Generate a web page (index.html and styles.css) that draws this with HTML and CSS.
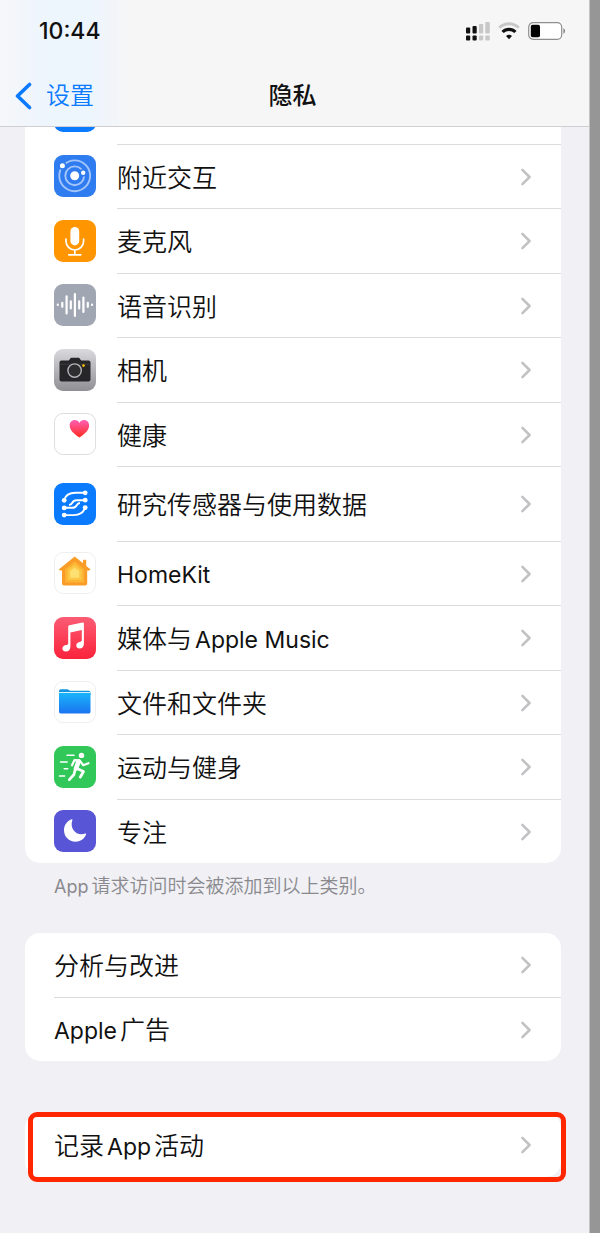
FILE: index.html
```
<!DOCTYPE html>
<html lang="zh-CN">
<head>
    <meta charset="UTF-8">
    <meta name="viewport" content="width=device-width, initial-scale=1.0">
    <title>隐私</title>
    <link rel="stylesheet" href="styles.css">
</head>
<body>
    <!-- 通用箭头 -->
    <svg class="defs" width="0" height="0" aria-hidden="true">
        <symbol id="arrow" viewBox="0 0 12 20">
            <path d="M2 2l8 8-8 8" fill="none" stroke="#c2c2c5" stroke-width="2.8" stroke-linecap="round" stroke-linejoin="round"/>
        </symbol>
    </svg>

    <div class="screen">
        <header>
            <div class="status-bar">
                <span class="time">10:44</span>
                <div class="status-icons">
                    <svg width="24" height="20" viewBox="0 0 24 20">
                        <g fill="#111">
                            <rect x="0" y="6.5" width="4.2" height="6" rx="1"/>
                            <rect x="6.5" y="5" width="4.2" height="7.5" rx="1"/>
                            <rect x="0" y="14.5" width="4.2" height="5" rx="1"/>
                            <rect x="6.5" y="14.5" width="4.2" height="5" rx="1"/>
                        </g>
                        <g fill="#c8c8c9">
                            <rect x="13" y="3" width="4.2" height="9.5" rx="1"/>
                            <rect x="19.3" y="1" width="4.5" height="11.5" rx="1"/>
                            <rect x="13" y="14.5" width="4.2" height="5" rx="1"/>
                            <rect x="19.3" y="14.5" width="4.5" height="5" rx="1"/>
                        </g>
                    </svg>
                    <svg width="22" height="18" viewBox="0 0 22 18">
                        <path d="M1.3 5.8a13.6 13.6 0 0 1 19.4 0" fill="none" stroke="#c8c8c9" stroke-width="3"/>
                        <path d="M4.6 10a9 9 0 0 1 12.8 0" fill="none" stroke="#111" stroke-width="3.2"/>
                        <path d="M8 14a4.6 4.6 0 0 1 6 0l-3 3.2z" fill="#111"/>
                    </svg>
                    <svg width="38" height="18" viewBox="0 0 38 18">
                        <rect x=".7" y=".7" width="33" height="16.6" rx="4.5" fill="#fff" stroke="#8e8e8e" stroke-width="1.2"/>
                        <rect x="2.8" y="2.8" width="9.2" height="12.4" rx="1.8" fill="#000"/>
                        <path d="M35.3 6.3c2.4.6 2.4 4.8 0 5.4z" fill="#8e8e8e"/>
                    </svg>
                </div>
            </div>
            <nav>
                <a class="back" href="#">
                    <svg width="18" height="28" viewBox="0 0 18 28">
                        <path d="M15.5 2.5L3.5 14l12 11.5" fill="none" stroke="#0a7aff" stroke-width="3.6" stroke-linecap="round" stroke-linejoin="round"/>
                    </svg>
                    <span>设置</span>
                </a>
                <h1>隐私</h1>
            </nav>
        </header>

        <main>
            <section class="card first">
                <div class="row clipped">
                    <svg class="icon" viewBox="0 0 42 42"><rect width="42" height="42" rx="9" fill="#0a7aff"/></svg>
                </div>
                <a class="row" href="#">
                    <svg class="icon" viewBox="0 0 42 42">
                        <rect width="42" height="42" rx="9" fill="#2f7bf0"/>
                        <g fill="none" stroke="#a3c5fa" stroke-width="1.9">
                            <circle cx="20.7" cy="20.8" r="15.4"/>
                            <circle cx="20.7" cy="20.8" r="9.4"/>
                        </g>
                        <g fill="#fff" stroke="#2f7bf0" stroke-width="1.6">
                            <circle cx="20.7" cy="20.8" r="5.3"/>
                            <circle cx="8.4" cy="10.8" r="3.3"/>
                            <circle cx="29.2" cy="17.8" r="3"/>
                        </g>
                    </svg>
                    <div class="label"><span>附近交互</span><svg class="arrow"><use href="#arrow"/></svg></div>
                </a>
                <a class="row" href="#">
                    <svg class="icon" viewBox="0 0 42 42">
                        <rect width="42" height="42" rx="9" fill="#ff9500"/>
                        <rect x="16.4" y="7" width="8.8" height="18.4" rx="4.4" fill="#fff"/>
                        <path d="M12 19v2.2a8.8 8.8 0 0 0 17.6 0V19M20.8 30v4.8M14.8 34.8h12" fill="none" stroke="#fff" stroke-width="1.7" stroke-linecap="round"/>
                    </svg>
                    <div class="label"><span>麦克风</span><svg class="arrow"><use href="#arrow"/></svg></div>
                </a>
                <a class="row" href="#">
                    <svg class="icon" viewBox="0 0 42 42">
                        <rect width="42" height="42" rx="9" fill="#a0a6b2"/>
                        <path d="M3.8 20.6v.4M8.3 18.8v4M12.6 12.4v17M16.8 17.4v7M20.9 10v22M25.2 17.4v7M29.4 13.6v14.4M33.8 18.8v4M38 20.6v.4" stroke="#fff" stroke-width="2.2" stroke-linecap="round"/>
                    </svg>
                    <div class="label"><span>语音识别</span><svg class="arrow"><use href="#arrow"/></svg></div>
                </a>
                <a class="row" href="#">
                    <svg class="icon" viewBox="0 0 42 42">
                        <linearGradient id="cam" x2="0" y2="1"><stop stop-color="#dad9de"/><stop offset="1" stop-color="#908f94"/></linearGradient>
                        <rect width="42" height="42" rx="9" fill="url(#cam)"/>
                        <path d="M7.5 11.5h6.800c1.400 0 1.400-2.800 3.400-2.800h6.600c2 0 2 2.800 3.400 2.800h6.800a2 2 0 0 1 2 2v17a2 2 0 0 1-2 2h-27a2 2 0 0 1-2-2v-17a2 2 0 0 1 2-2z" fill="#262628"/>
                        <path d="M5.5 15.2h31" stroke="#4a4a4d" stroke-width=".6"/>
                        <circle cx="20.6" cy="21.6" r="7.8" fill="#262628"/>
                        <circle cx="20.6" cy="21.6" r="6.7" fill="#2e2e30" stroke="#b4b4b8" stroke-width="1.4"/>
                        <circle cx="29.5" cy="16.6" r="1.3" fill="#f7c600"/>
                    </svg>
                    <div class="label"><span>相机</span><svg class="arrow"><use href="#arrow"/></svg></div>
                </a>
                <a class="row" href="#">
                    <svg class="icon" viewBox="0 0 42 42">
                        <linearGradient id="heart" x2="0" y2="1"><stop stop-color="#ff5fb4"/><stop offset="1" stop-color="#ff2a1c"/></linearGradient>
                        <rect x=".5" y=".5" width="41" height="41" rx="8.5" fill="#fff" stroke="#dedee0"/>
                        <path d="M25.4 24.6C20 21 15.7 17.3 15.7 12.6c0-3.2 2.2-5.5 5-5.5 2 0 3.8 1 4.7 2.8.9-1.8 2.7-2.8 4.7-2.8 2.8 0 5 2.3 5 5.5 0 4.7-4.3 8.4-9.7 12z" fill="url(#heart)"/>
                    </svg>
                    <div class="label"><span>健康</span><svg class="arrow"><use href="#arrow"/></svg></div>
                </a>
                <a class="row tall" href="#">
                    <svg class="icon" viewBox="0 0 42 42">
                        <rect width="42" height="42" rx="9" fill="#0a7aff"/>
                        <g fill="none" stroke="#fff" stroke-width="1.9">
                            <path d="M31 9.8H21.5C15 9.8 11.5 12 10 17.3"/>
                            <path d="M10 17.3H8M31 17.2h-8.5c-5.500 0-3 4.800-7.500 4.800"/>
                            <path d="M10 24.8h8.500c5.500 0 3-4.800 7.500-4.800"/>
                            <path d="M10 32.1h9.5c6.5 0 10-2.200 11.500-7.500"/>
                        </g>
                        <g fill="#fff">
                            <circle cx="31.2" cy="9.8" r="2.4"/>
                            <circle cx="31.2" cy="17.2" r="2.4"/>
                            <circle cx="31.2" cy="24.6" r="2.4"/>
                            <circle cx="10.2" cy="17.3" r="2.4"/>
                            <circle cx="10.2" cy="24.8" r="2.4"/>
                            <circle cx="10.2" cy="32.1" r="2.4"/>
                        </g>
                    </svg>
                    <div class="label"><span>研究传感器与使用数据</span><svg class="arrow"><use href="#arrow"/></svg></div>
                </a>
                <a class="row" href="#">
                    <svg class="icon" viewBox="0 0 42 42">
                        <rect x=".5" y=".5" width="41" height="41" rx="8.5" fill="#fff" stroke="#efeff1"/>
                        <path d="M20.7 4.5L29 11.2V8.5q0-.8.8-.8h1.6q.8 0 .8.8v5.4l4.2 3.3q-.4 1.4-1.6 1.2H33.2v13.2q0 2-2 2H10q-2 0-2-2V18.4H6.4q-1.2 0-1.4-1.2z" fill="#fa9d28"/>
                        <path d="M20.7 9.5l9.5 7.6v13.4H11.2V17.1z" fill="#fdb334"/>
                        <path d="M20.7 12.5l7 5.6v9.9h-14v-9.9z" fill="#fdc746"/>
                        <path d="M20.7 15.4l4.5 3.7v6.6h-9v-6.6z" fill="#fedf72"/>
                    </svg>
                    <div class="label"><span class="latin">HomeKit</span><svg class="arrow"><use href="#arrow"/></svg></div>
                </a>
                <a class="row" href="#">
                    <svg class="icon" viewBox="0 0 42 42">
                        <linearGradient id="music" x2="0" y2="1"><stop stop-color="#fb5c74"/><stop offset="1" stop-color="#fa233b"/></linearGradient>
                        <rect width="42" height="42" rx="9" fill="url(#music)"/>
                        <path d="M14.2 9.8q0-1.2 1.2-1.5l13.2-2.8q1.3-.2 1.3 1v20.2c0 3-1.7 4.7-4.3 4.7-2 0-3.3-1.2-3.3-3 0-1.9 1.3-3 3.2-3.4 1.5-.3 2.3-.7 2.3-2V13l-11.4 2.5v14c0 3.3-1.8 5-4.5 5-2.1 0-3.5-1.2-3.5-3s1.4-3 3.3-3.4c1.7-.3 2.5-.8 2.5-2.2z" fill="#fff"/>
                    </svg>
                    <div class="label"><span>媒体与<span class="latin after">Apple Music</span></span><svg class="arrow"><use href="#arrow"/></svg></div>
                </a>
                <a class="row" href="#">
                    <svg class="icon" viewBox="0 0 42 42">
                        <linearGradient id="folder" x2="0" y2="1"><stop stop-color="#19b4fa"/><stop offset="1" stop-color="#1b74f0"/></linearGradient>
                        <rect x=".5" y=".5" width="41" height="41" rx="8.5" fill="#fff" stroke="#efeff1"/>
                        <path d="M5 10q0-1.7 1.7-1.7H13c1.8 0 1.8 1.5 3.5 1.5h18.3q1.7 0 1.7 1.7V14H5z" fill="#1594dd"/>
                        <path d="M5 11.5h31.5" stroke="#d5f0ff" stroke-width="1"/>
                        <path d="M5 12h31.5v18.8q0 1.7-1.7 1.7H6.7q-1.7 0-1.7-1.7z" fill="url(#folder)"/>
                    </svg>
                    <div class="label"><span>文件和文件夹</span><svg class="arrow"><use href="#arrow"/></svg></div>
                </a>
                <a class="row" href="#">
                    <svg class="icon" viewBox="0 0 42 42">
                        <rect width="42" height="42" rx="9" fill="#32c759"/>
                        <circle cx="27.5" cy="9.4" r="2.7" fill="#fff"/>
                        <g fill="none" stroke="#fff" stroke-linecap="round" stroke-linejoin="round">
                            <path d="M13 9.2h7M6.5 16h6.7M10.2 22.7h3.5M5.5 29.9h5.2" stroke-width="1.5"/>
                            <path d="M18 19.3l2.5-5.2 5 .3 3.8 4.8 5.2-2" stroke-width="2.2"/>
                            <path d="M24.6 15.5l-2.6 7" stroke-width="4.6"/>
                            <path d="M23 22.5l6.5 3-3.3 5.7M21 24l-1 4.5-4.7 5.2" stroke-width="2.7"/>
                        </g>
                    </svg>
                    <div class="label"><span>运动与健身</span><svg class="arrow"><use href="#arrow"/></svg></div>
                </a>
                <a class="row" href="#">
                    <svg class="icon" viewBox="0 0 42 42">
                        <rect width="42" height="42" rx="9" fill="#5856d6"/>
                        <path d="M17.6 9.3C12.8 11.2 10 15.4 10 20.3c0 6.4 5 11.4 11.4 11.4 4.9 0 9.1-2.9 10.7-7.5.2-.7-.2-1-.8-.7C23.5 26.700 15 19.5 18.4 10c.2-.6-.2-.9-.8-.7z" fill="#fff"/>
                    </svg>
                    <div class="label"><span>专注</span><svg class="arrow"><use href="#arrow"/></svg></div>
                </a>
            </section>
            <p class="note"><span class="latin before">App</span>请求访问时会被添加到以上类别。</p>

            <section class="card">
                <a class="row" href="#">
                    <div class="label"><span>分析与改进</span><svg class="arrow"><use href="#arrow"/></svg></div>
                </a>
                <a class="row" href="#">
                    <div class="label"><span><span class="latin before">Apple</span>广告</span><svg class="arrow"><use href="#arrow"/></svg></div>
                </a>
            </section>

            <section class="card marked">
                <a class="row" href="#">
                    <div class="label"><span>记录<span class="latin before after">App</span>活动</span><svg class="arrow"><use href="#arrow"/></svg></div>
                </a>
            </section>
        </main>
    </div>
</body>
</html>
```
FILE: styles.css
```
* {
    box-sizing: border-box;
}
body {
    margin: 0;
    font-family: Inter, "Noto Sans CJK SC", sans-serif;
    color: #111;
    background-color: #969696;
}
a {
    color: inherit;
    text-decoration: none;
}
.defs {
    position: absolute;
}
.screen {
    min-height: 100vh;
    margin-right: 10px;
    background-color: #f0f0f5;
    border-right: 1px solid #c4c4c6;
}

/* 顶部栏 */
header {
    height: 127px;
    border-bottom: 1px solid #cfcfd1;
    background: linear-gradient(to right, #f6f7f9, #edf5fd 50px, #edf5fd 90px, #f6f6f6 130px);
}
.status-bar {
    display: flex;
    justify-content: space-between;
    align-items: center;
    height: 61px;
    padding: 0 23px 0 39px;
}
.time {
    font-size: 23px;
    font-weight: 500;
}
.status-icons {
    display: flex;
    align-items: center;
    gap: 8px;
}
nav {
    display: grid;
    grid-template-columns: 1fr auto 1fr;
    align-items: center;
    height: 65px;
    padding: 4px 18px 0 14px;
}
nav h1 {
    margin: 0;
    font-size: 24px;
    font-weight: 500;
    line-height: 32px;
}
.back {
    display: flex;
    align-items: center;
    gap: 14px;
    font-size: 24px;
    line-height: 32px;
    font-weight: 350;
    color: #0a7aff;
}

/* 列表 */
main {
    padding: 0 28px 52px 25px;
}
.card {
    position: relative;
    margin-bottom: 52px;
    border-radius: 15px;
    background-color: #fff;
}
.card.first {
    margin: 0;
    border-radius: 0 0 15px 15px;
}
.row {
    display: flex;
    align-items: center;
    height: 64px;
    padding-left: 29px;
}
.card.first .row:nth-child(odd) {
    height: 65px;
}
.card.first .row.tall {
    height: 75px;
}
.card.first .row.clipped {
    height: 17px;
    align-items: flex-end;
    padding-bottom: 12px;
    overflow: hidden;
}
.icon {
    flex: none;
    width: 42px;
    height: 42px;
    margin-right: 21px;
}
.label {
    flex: 1;
    display: flex;
    align-items: center;
    justify-content: space-between;
    height: 100%;
    padding-right: 29px;
    border-top: 1px solid #dcdcdf;
    font-size: 25px;
    font-weight: 350;
    line-height: 32px;
}
.label > span {
    padding-top: 2px;
}
.card:not(.first) .row:first-child .label {
    border-top: none;
}
/* 英文比中文略小 */
.latin {
    font-size: 23px;
    font-weight: 400;
}
.latin.before {
    margin-right: 3px;
}
.latin.after {
    margin-left: 3px;
}
.arrow {
    width: 12px;
    height: 18px;
}
.note {
    margin: 0;
    padding: 10px 29px 32px;
    font-size: 19px;
    font-weight: 350;
    line-height: 28px;
    color: #8a8a8e;
}
.note .latin {
    font-size: 18px;
}

/* 红框标注 */
.marked::after {
    content: "";
    position: absolute;
    top: -1px;
    right: -5px;
    bottom: -5px;
    left: 3px;
    border: 5px solid #ff2600;
    border-radius: 9px;
}
```
